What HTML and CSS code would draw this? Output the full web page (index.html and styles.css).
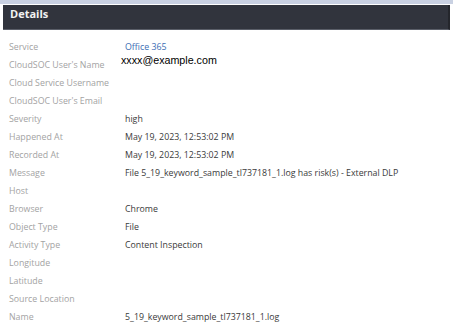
FILE: index.html
```html
<!DOCTYPE html>
<html lang="en">
<head>
    <meta charset="UTF-8">
    <title>Details</title>
    <link rel="stylesheet" href="styles.css">
</head>
<body>
    <div class="panel">
        <div class="panel-head">Details</div>
        <div class="rows">
            <div class="row"><span class="label">Service</span><span class="value link">Office 365</span></div>
            <div class="row"><span class="label">CloudSOC User's Name</span><span class="value email">xxxx@example.com</span></div>
            <div class="row"><span class="label">Cloud Service Username</span><span class="value"></span></div>
            <div class="row"><span class="label">CloudSOC User's Email</span><span class="value"></span></div>
            <div class="row"><span class="label">Severity</span><span class="value">high</span></div>
            <div class="row"><span class="label">Happened At</span><span class="value">May 19, 2023, 12:53:02 PM</span></div>
            <div class="row"><span class="label">Recorded At</span><span class="value">May 19, 2023, 12:53:02 PM</span></div>
            <div class="row"><span class="label">Message</span><span class="value">File 5_19_keyword_sample_tl737181_1.log has risk(s) - External DLP</span></div>
            <div class="row"><span class="label">Host</span><span class="value"></span></div>
            <div class="row"><span class="label">Browser</span><span class="value">Chrome</span></div>
            <div class="row"><span class="label">Object Type</span><span class="value">File</span></div>
            <div class="row"><span class="label">Activity Type</span><span class="value">Content Inspection</span></div>
            <div class="row"><span class="label">Longitude</span><span class="value"></span></div>
            <div class="row"><span class="label">Latitude</span><span class="value"></span></div>
            <div class="row"><span class="label">Source Location</span><span class="value"></span></div>
            <div class="row"><span class="label">Name</span><span class="value">5_19_keyword_sample_tl737181_1.log</span></div>
        </div>
    </div>
</body>
</html>
```
FILE: styles.css
```css
body {
    margin: 0;
    background-color: #fff;
    font-family: "Open Sans", "Noto Sans", sans-serif;
    border-top: 4px solid #c9d1e2;
}
.panel {
    margin: 1px 3px 0 3px;
}
.panel-head {
    background-color: #31343d;
    color: #f2f2f2;
    font-size: 11px;
    font-weight: bold;
    height: 25px;
    line-height: 17px;
    padding-left: 7px;
    border-right: 2px solid #24262c;
    border-bottom: 1px solid #5a5e68;
    box-sizing: border-box;
}
.rows {
    padding-top: 8px;
}
.row {
    display: flex;
    height: 18px;
    line-height: 18px;
    font-size: 8.8px;
}
.label {
    width: 116px;
    padding-left: 6px;
    color: #a3a3a3;
}
.value {
    color: #3a3a3a;
}
.link {
    color: #3c6eb4;
}
.email {
    font-family: "Liberation Sans", Arial, sans-serif;
    font-size: 10.7px;
    color: #000;
    margin-left: -4px;
    position: relative;
    top: -5px;
}
```
